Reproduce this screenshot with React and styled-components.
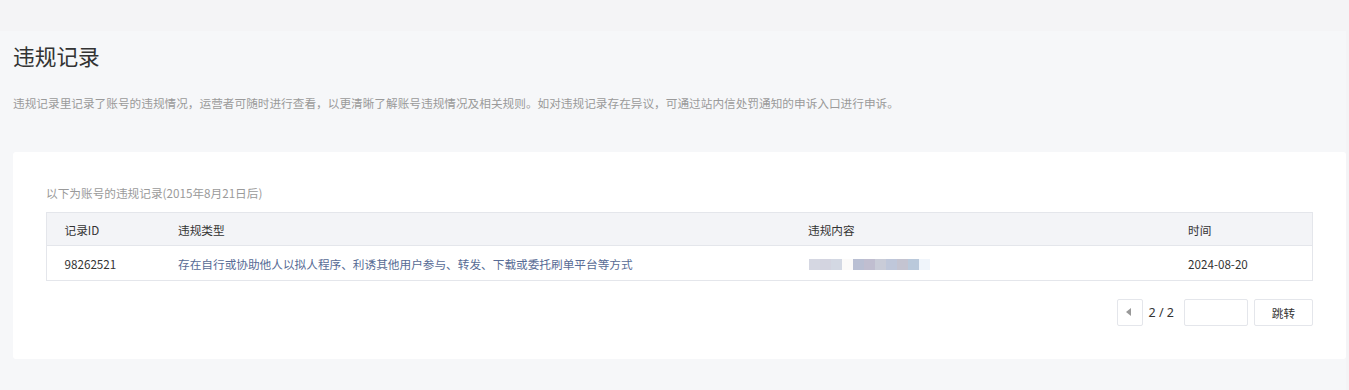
import React from 'react'
import styled, { createGlobalStyle } from 'styled-components'

const GlobalStyle = createGlobalStyle`
  body {
    margin: 0;
    background: #f4f4f6;
    font-family: "Noto Sans CJK SC", "Noto Sans", sans-serif;
    color: #333;
  }
`

const TopStrip = styled.div`
  height: 31px;
`

const Main = styled.div`
  width: 1346px;
  box-sizing: border-box;
  background: #f6f7f9;
  padding: 10px 0 31px 13px;
`

const Title = styled.h2`
  margin: 0;
  font-size: 21.7px;
  line-height: 30px;
  font-weight: 400;
  color: #333;
`

const Desc = styled.p`
  margin: 22px 0 0;
  font-size: 11.67px;
  line-height: 20px;
  color: #9a9a9a;
`

const Card = styled.div`
  margin-top: 39px;
  background: #fff;
  border-radius: 3px;
  padding: 31px 33px 33px;
`

const Caption = styled.div`
  font-size: 11.67px;
  line-height: 20px;
  color: #9a9a9a;
  margin-bottom: 9px;
`

const Table = styled.table`
  width: 100%;
  border-collapse: collapse;
  table-layout: fixed;
  font-size: 11.67px;
`

const Th = styled.th`
  box-sizing: border-box;
  width: ${p => p.$w ? p.$w + 'px' : 'auto'};
  height: 33px;
  padding: 0 0 0 17.5px;
  text-align: left;
  font-weight: 400;
  color: #333;
  background: #f3f4f7;
  border: 1px solid #e4e6eb;
  border-left: ${p => p.$first ? '1px solid #e4e6eb' : 'none'};
  border-right: ${p => p.$last ? '1px solid #e4e6eb' : 'none'};
`

const Td = styled.td`
  height: 34px;
  padding: 0 0 0 17.5px;
  color: ${p => p.$link ? '#576b95' : '#333'};
  border-top: 1px solid #e4e6eb;
  border-bottom: 1px solid #e4e6eb;
  border-left: ${p => p.$first ? '1px solid #e4e6eb' : 'none'};
  border-right: ${p => p.$last ? '1px solid #e4e6eb' : 'none'};
`

const Mosaic = styled.div`
  display: flex;
  height: 11px;
  margin: 2px 0 0 1px;
`

const Cell = styled.span`
  width: 11px;
  height: 11px;
  background: ${p => p.$c};
`

const Pager = styled.div`
  display: flex;
  justify-content: flex-end;
  align-items: center;
  margin-top: 17.5px;
`

const PrevBtn = styled.button`
  width: 26px;
  height: 27px;
  box-sizing: border-box;
  border: 1px solid #e4e6eb;
  border-radius: 2px;
  background: #fff;
  padding: 0;
  display: flex;
  align-items: center;
  justify-content: center;
`

const Arrow = styled.span`
  width: 0;
  height: 0;
  border-top: 4px solid transparent;
  border-bottom: 4px solid transparent;
  border-right: 5px solid #999;
  margin-left: -2px;
`

const PageNum = styled.span`
  font-size: 12.5px;
  color: #333;
  margin: 0 10px 0 6px;
  font-family: "Noto Sans", sans-serif;
`

const JumpInput = styled.input`
  width: 64px;
  height: 27px;
  box-sizing: border-box;
  border: 1px solid #e4e6eb;
  border-radius: 2px;
  margin: 0 6px 0 0;
`

const JumpBtn = styled.button`
  width: 59px;
  height: 27px;
  box-sizing: border-box;
  border: 1px solid #e4e6eb;
  border-radius: 2px;
  background: #fff;
  font-family: inherit;
  font-size: 11.67px;
  color: #333;
  padding: 0;
`

const cells = [
  '#d5d7e2', '#d3d4e0', '#d3d8e3', '#fbfaf9',
  '#b9bfd3', '#c0bed0', '#c9ccd8', '#bfc7da', '#c4c4d1', '#bac9db', '#f0f5fb'
]

export default function App() {
  return (
    <>
      <GlobalStyle />
      <TopStrip />
      <Main>
        <Title>违规记录</Title>
        <Desc>违规记录里记录了账号的违规情况，运营者可随时进行查看，以更清晰了解账号违规情况及相关规则。如对违规记录存在异议，可通过站内信处罚通知的申诉入口进行申诉。</Desc>
        <Card>
          <Caption>以下为账号的违规记录(2015年8月21日后)</Caption>
          <Table>
            <thead>
              <tr>
                <Th $w={114} $first>记录ID</Th>
                <Th $w={630}>违规类型</Th>
                <Th $w={380}>违规内容</Th>
                <Th $last>时间</Th>
              </tr>
            </thead>
            <tbody>
              <tr>
                <Td $first>98262521</Td>
                <Td $link>存在自行或协助他人以拟人程序、利诱其他用户参与、转发、下载或委托刷单平台等方式</Td>
                <Td>
                  <Mosaic>
                    {cells.map((c, i) => <Cell key={i} $c={c} />)}
                  </Mosaic>
                </Td>
                <Td $last>2024-08-20</Td>
              </tr>
            </tbody>
          </Table>
          <Pager>
            <PrevBtn><Arrow /></PrevBtn>
            <PageNum>2 / 2</PageNum>
            <JumpInput />
            <JumpBtn>跳转</JumpBtn>
          </Pager>
        </Card>
      </Main>
    </>
  )
}
